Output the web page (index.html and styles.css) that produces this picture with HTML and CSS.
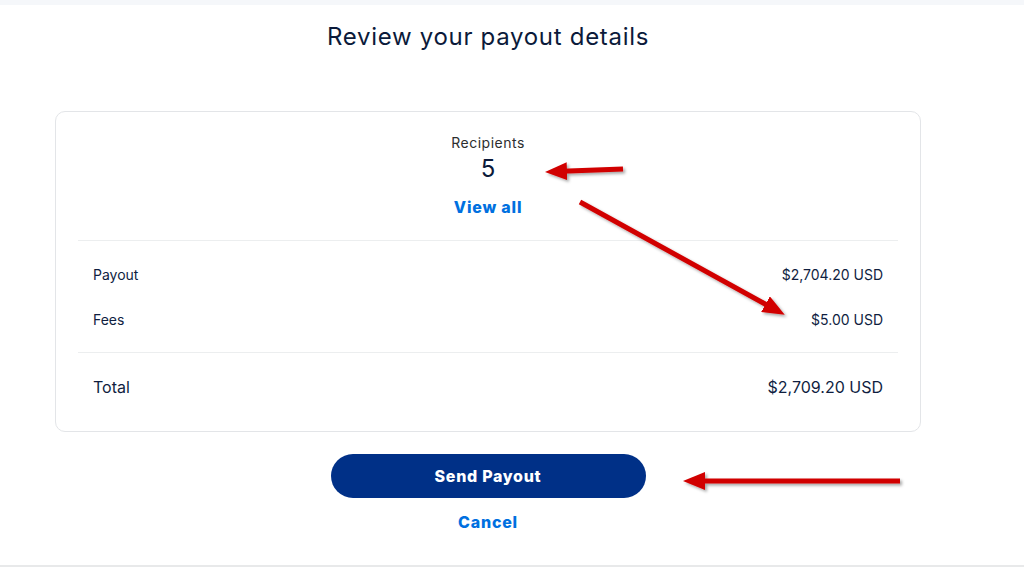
FILE: index.html
```html
<!DOCTYPE html>
<html>
<head>
  <meta charset="UTF-8">
  <title>Review your payout details</title>
  <link rel="stylesheet" href="styles.css">
</head>
<body>
  <div class="topbar"></div>

  <div class="page">
    <h1 class="title">Review your payout details</h1>

    <div class="card">
      <div class="recipients">
        <div class="recipients-label">Recipients</div>
        <div class="recipients-count">5</div>
        <a class="link view-all" href="#">View all</a>
      </div>

      <div class="lines">
        <div class="row">
          <span>Payout</span>
          <span>$2,704.20 USD</span>
        </div>
        <div class="row">
          <span>Fees</span>
          <span>$5.00 USD</span>
        </div>
      </div>

      <div class="row total">
        <span>Total</span>
        <span>$2,709.20 USD</span>
      </div>
    </div>

    <button class="send-btn">Send Payout</button>
    <a class="link cancel" href="#">Cancel</a>
  </div>

  <div class="footer-line"></div>

  <!-- annotation arrows drawn over the page -->
  <svg class="arrows" xmlns="http://www.w3.org/2000/svg" viewBox="0 0 1024 567">
    <defs>
      <marker id="head" markerUnits="userSpaceOnUse" markerWidth="22" markerHeight="18" refX="12" refY="9" orient="auto">
        <path d="M0,0 L22,9 L0,18 Z" fill="#d10000"/>
      </marker>
      <filter id="shadow" x="-10%" y="-10%" width="120%" height="130%">
        <feDropShadow dx="2" dy="2" stdDeviation="1.5" flood-color="#000" flood-opacity="0.35"/>
      </filter>
    </defs>
    <g filter="url(#shadow)" stroke="#d10000" stroke-width="5" fill="none">
      <line x1="623" y1="169" x2="555" y2="171.6" marker-end="url(#head)"/>
      <line x1="580" y1="202" x2="776" y2="310" marker-end="url(#head)"/>
      <line x1="900" y1="481" x2="693" y2="481" marker-end="url(#head)"/>
    </g>
  </svg>
</body>
</html>
```

FILE: styles.css
```css
* {
  box-sizing: border-box;
}

body {
  margin: 0;
  min-height: 100vh;
  display: flex;
  flex-direction: column;
  background-color: #fff;
  font-family: Inter, "Liberation Sans", Arial, sans-serif;
  color: #0f1e3f;
}

.topbar {
  height: 5px;
  background-color: #f5f7fa;
}

.page {
  width: 866px;
  margin-left: 55px;
  display: flex;
  flex-direction: column;
  align-items: center;
}

.title {
  margin: 18px 0 0;
  font-size: 24px;
  line-height: 28px;
  font-weight: 400;
  letter-spacing: 0.7px;
  color: #0b1a3a;
}

.card {
  width: 100%;
  margin-top: 60px;
  padding: 22px;
  border: 1px solid #e3e5e8;
  border-radius: 10px;
}

.recipients {
  display: flex;
  flex-direction: column;
  align-items: center;
  padding-bottom: 23px;
  border-bottom: 1px solid #eceeef;
}

.recipients-label {
  font-size: 14px;
  line-height: 18px;
  letter-spacing: 0.5px;
  color: #2c2e2f;
}

.recipients-count {
  margin-top: 3px;
  font-size: 24px;
  line-height: 28px;
  color: #0b1a3a;
}

.link {
  font-size: 16px;
  line-height: 20px;
  font-weight: 800;
  letter-spacing: 0.8px;
  color: #0070e0;
  text-decoration: none;
}

.view-all {
  margin-top: 14px;
}

.lines {
  display: flex;
  flex-direction: column;
  gap: 27px;
  padding: 25px 0 23px;
  border-bottom: 1px solid #eceeef;
}

.row {
  display: flex;
  justify-content: space-between;
  padding: 0 15px;
  font-size: 14px;
  line-height: 18px;
}

.total {
  padding-top: 24px;
  padding-bottom: 12px;
  font-size: 16px;
  line-height: 20px;
}

.send-btn {
  width: 315px;
  height: 44px;
  margin-top: 22px;
  border: none;
  border-radius: 22px;
  background-color: #003087;
  color: #fff;
  font-family: inherit;
  font-size: 16px;
  font-weight: 800;
  letter-spacing: 0.7px;
  cursor: pointer;
}

.cancel {
  margin-top: 14px;
}

.footer-line {
  margin-top: auto;
  height: 2px;
  background-color: #e8e9ea;
}

.arrows {
  position: absolute;
  top: 0;
  left: 0;
  width: 1024px;
  height: 567px;
  pointer-events: none;
}
```
